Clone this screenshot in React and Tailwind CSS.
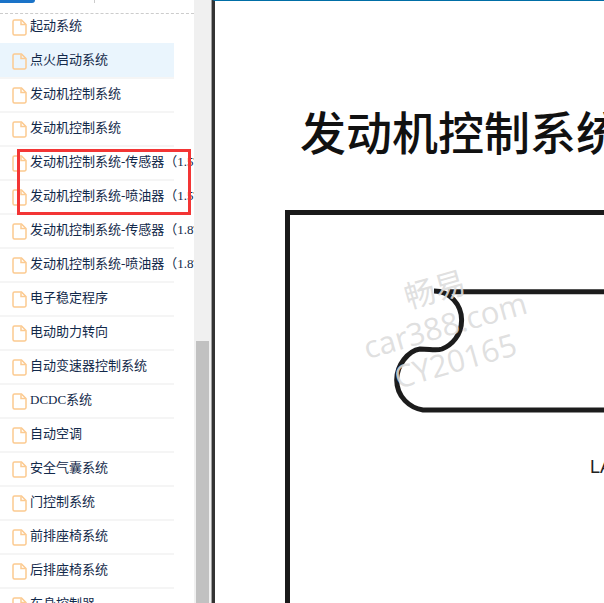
const items = [
  { label: "起动系统", joined: true },
  { label: "点火启动系统", active: true },
  { label: "发动机控制系统" },
  { label: "发动机控制系统" },
  { label: "发动机控制系统-传感器（1.5T）" },
  { label: "发动机控制系统-喷油器（1.5T）" },
  { label: "发动机控制系统-传感器（1.8T）" },
  { label: "发动机控制系统-喷油器（1.8T）" },
  { label: "电子稳定程序" },
  { label: "电动助力转向" },
  { label: "自动变速器控制系统" },
  { label: "DCDC系统" },
  { label: "自动空调" },
  { label: "安全气囊系统" },
  { label: "门控制系统" },
  { label: "前排座椅系统" },
  { label: "后排座椅系统" },
  { label: "车身控制器" },
];

const FileIcon = () => (
  <svg width="15" height="17" viewBox="0 0 15 17" className="shrink-0 ml-3" fill="none">
    <path d="M2.5 1h7L14 5.500V14.500a1.500 1.500 0 0 1-1.500 1.500h-10A1.500 1.500 0 0 1 1 14.500V2.500A1.500 1.500 0 0 1 2.500 1z" stroke="#fcca90" strokeWidth="1.500" />
    <path d="M9 1.500V5.500H13.500" stroke="#fcca90" strokeWidth="1.500" />
  </svg>
);

const TreeRow = ({ label, active, joined }) => (
  <div className={`flex items-center h-[34px] w-[174px] whitespace-nowrap border-b-2 ${active ? "bg-[#eaf5fd] border-[#f5f5f5]" : joined ? "border-[#eaf5fd]" : "border-[#f5f5f5]"}`}>
    <FileIcon />
    <span className="ml-[3px] pb-[2px] text-[13px] text-[#12294a] font-['Liberation_Serif','Noto_Sans_CJK_SC',serif]">{label}</span>
  </div>
);

export default function App() {
  return (
    <div className="relative flex w-[604px] h-[603px] overflow-hidden bg-white font-['Noto_Sans_CJK_SC',sans-serif]">
      <aside className="relative w-[194px] shrink-0 overflow-hidden">
        <div className="relative h-[14px] border-b border-dashed border-[#cccccc]">
          <div className="absolute left-0 top-0 w-[35px] h-[3px] bg-[#1a73c8] rounded-br-[4px]" />
          <div className="absolute left-[94px] top-0 w-px h-[3px] bg-[#cccccc]" />
        </div>
        <div className="-mt-[3px]">
          {items.map((item, i) => (
            <TreeRow key={i} label={item.label} active={item.active} joined={item.joined} />
          ))}
        </div>
        <div className="absolute left-[17px] top-[149px] w-[174px] h-[66px] border-[3px] border-[#f33535]" />
      </aside>

      <div className="flex w-[18px] shrink-0 bg-[#f0f0f0]">
        <div className="w-[2px]" />
        <div className="flex flex-col w-[13px]">
          <div className="h-[341px]" />
          <div className="flex-1 bg-[#c1c1c1]" />
        </div>
        <div className="w-[2px]" />
        <div className="w-px bg-[#a0a0a0]" />
      </div>

      <main className="relative flex-1 bg-white border-l-[3px] border-l-[#333333] border-t border-t-[#006ea6] overflow-hidden">
        <h1 className="mt-[100px] ml-[85px] whitespace-nowrap text-[46px] leading-[58px] font-medium text-[#111111]">发动机控制系统</h1>
        <div className="relative mt-[51px] ml-[70px] w-[400px] h-[500px] border-[5px] border-[#1a1a1a] border-r-0">
          <svg className="absolute left-[100px] top-[70px]" width="320" height="130" viewBox="0 0 320 130" fill="none">
            <path d="M58 6.700 L320 6.700" stroke="#1c1c1c" strokeWidth="5" />
            <path d="M44 6 C60 6 71.600 20 71.600 35 C71.600 50 62 60 52 64 C46 66 40 64 30 64 C18 66 6.700 80 6.700 95 C6.700 112 20 123 33 125 L320 125" stroke="#1c1c1c" strokeWidth="5" />
          </svg>
          <span className="absolute left-[300px] top-[239px] text-[18px] text-[#222222] font-['Liberation_Sans',sans-serif]">LA</span>
        </div>
      </main>

      <div className="absolute left-[445px] top-[325px] -translate-x-1/2 -translate-y-1/2 -rotate-[16deg] flex flex-col items-center text-[31px] leading-[37px] text-[#dcdcdc]/90 whitespace-nowrap font-['Open_Sans','Noto_Sans_CJK_SC',sans-serif]">
        <span>畅易</span>
        <span>car388.com</span>
        <span>CY20165</span>
      </div>
    </div>
  );
}
